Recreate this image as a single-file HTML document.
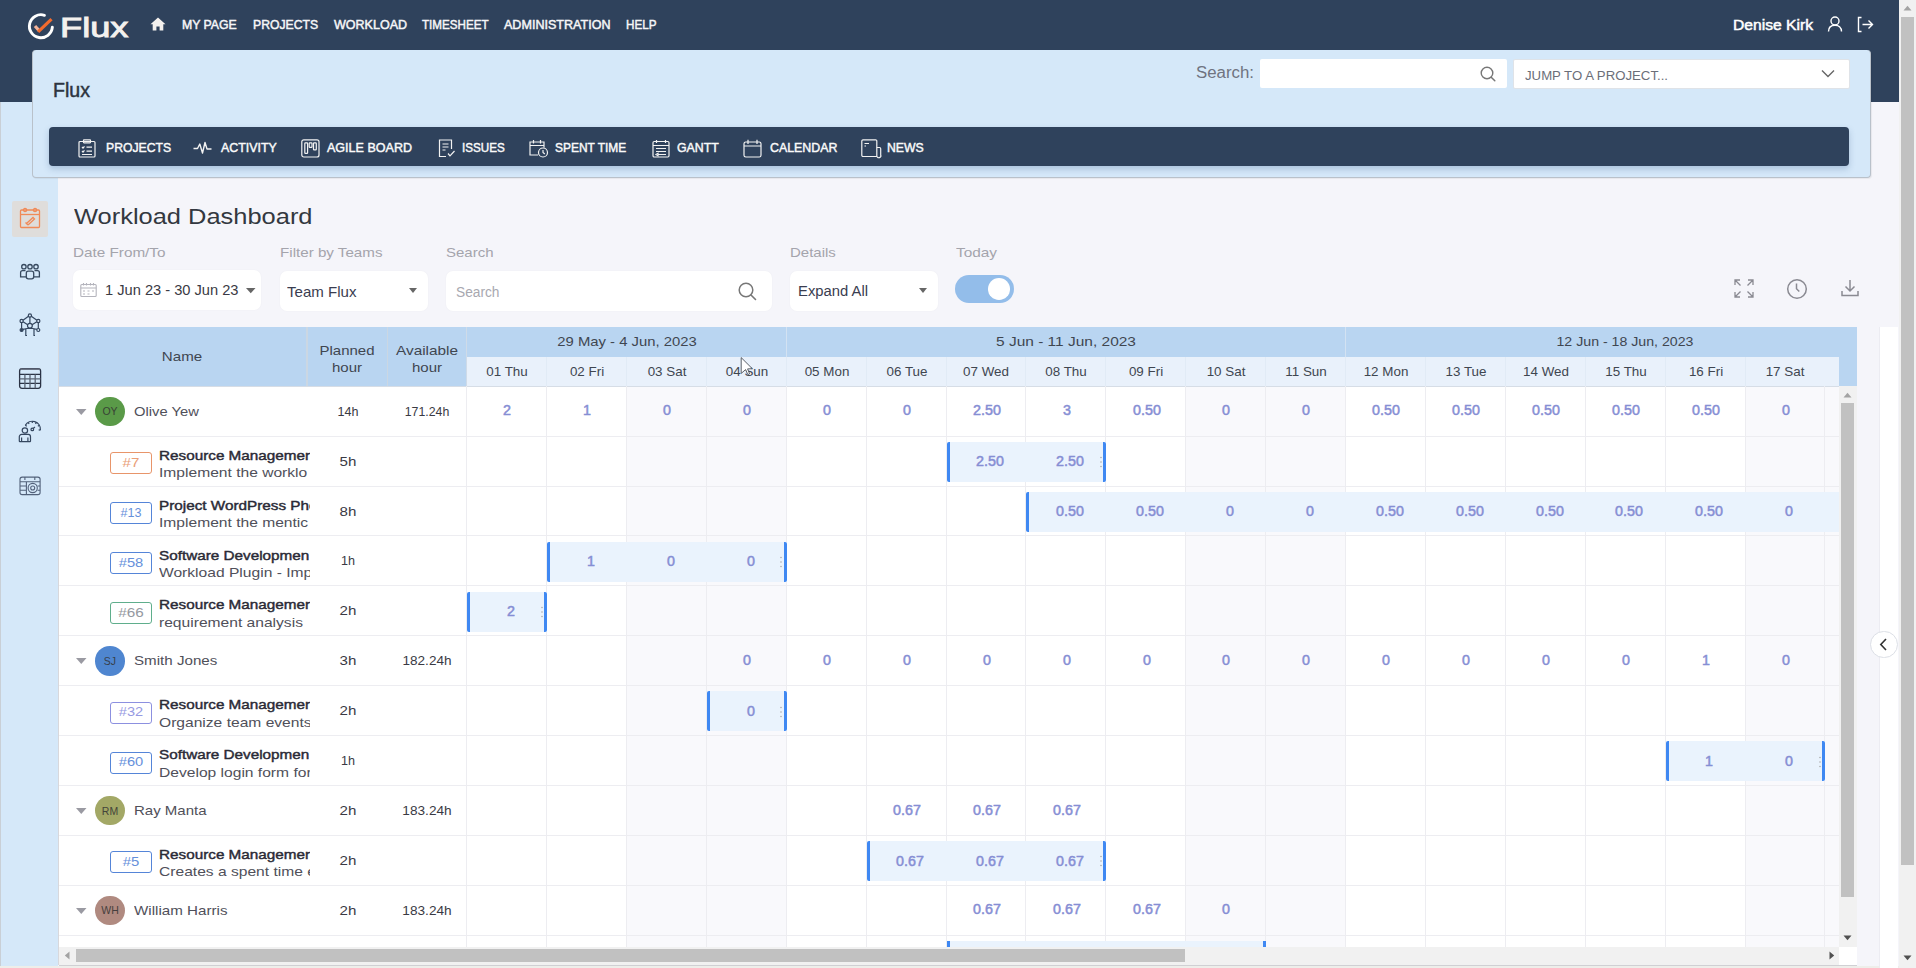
<!DOCTYPE html>
<html><head><meta charset="utf-8">
<title>Workload Dashboard</title>
<style>
*{box-sizing:border-box;margin:0;padding:0}
html,body{width:1916px;height:968px;overflow:hidden;background:#f5f5fa;font-family:"Liberation Sans",sans-serif;color:#333}
.t{position:absolute;white-space:nowrap;line-height:1}
.r{position:absolute}
svg{position:absolute;overflow:visible}
</style></head><body>
<div class="r" style="left:0px;top:0px;width:1899px;height:102px;background:#2f425c;"></div><div class="r" style="left:1899px;top:0px;width:17px;height:968px;background:#f1f1f1;"></div><div class="r" style="left:1901px;top:17px;width:13px;height:848px;background:#c1c1c1;"></div><svg style="left:1903px;top:5px" width="9" height="6"><path d="M0.5 5.5 L4.5 0.8 L8.5 5.5Z" fill="#a3a3a3"/></svg><svg style="left:1903px;top:955px" width="9" height="6"><path d="M0.5 0.5 L4.5 5.2 L8.5 0.5Z" fill="#505050"/></svg><svg style="left:27px;top:12px" width="30" height="30" viewBox="0 0 30 30">
<path d="M17.45 3.26 A11.5 11.5 0 1 0 25.36 15.2" fill="none" stroke="#fff" stroke-width="2.9" stroke-linecap="round"/>
<path d="M8 14 L12.2 18.8" fill="none" stroke="#f3b49b" stroke-width="3.2" stroke-linecap="butt"/>
<path d="M11.1 19.9 L24.5 7.2" fill="none" stroke="#f26b2e" stroke-width="3.2" stroke-linecap="butt"/>
</svg><div class="t" style="top:13.90px;font-size:28px;font-weight:400;color:#f4f1ee;-webkit-text-stroke:0.9px #f4f1ee;left:59.50px;transform:scaleX(1.2947);transform-origin:0 0;"><span id="f1">Flux</span></div><svg style="left:150px;top:17px" width="16" height="14" viewBox="0 0 16 14"><path d="M8 0.5 L15.5 7.2 L13.3 7.2 L13.3 13.5 L9.6 13.5 L9.6 9.5 L6.4 9.5 L6.4 13.5 L2.7 13.5 L2.7 7.2 L0.5 7.2Z" fill="#f4f1ee"/></svg><div class="t" style="top:18.87px;font-size:12.2px;font-weight:400;color:#f6f6f8;-webkit-text-stroke:0.45px #f6f6f8;left:182.40px;transform:scaleX(1.0069);transform-origin:0 0;"><span id="f2">MY PAGE</span></div><div class="t" style="top:18.87px;font-size:12.2px;font-weight:400;color:#f6f6f8;-webkit-text-stroke:0.45px #f6f6f8;left:252.50px;transform:scaleX(1.0013);transform-origin:0 0;"><span id="f3">PROJECTS</span></div><div class="t" style="top:18.87px;font-size:12.2px;font-weight:400;color:#f6f6f8;-webkit-text-stroke:0.45px #f6f6f8;left:333.60px;transform:scaleX(1.0280);transform-origin:0 0;"><span id="f4">WORKLOAD</span></div><div class="t" style="top:18.87px;font-size:12.2px;font-weight:400;color:#f6f6f8;-webkit-text-stroke:0.45px #f6f6f8;left:422.20px;transform:scaleX(0.9534);transform-origin:0 0;"><span id="f5">TIMESHEET</span></div><div class="t" style="top:18.87px;font-size:12.2px;font-weight:400;color:#f6f6f8;-webkit-text-stroke:0.45px #f6f6f8;left:504.30px;transform:scaleX(1.0302);transform-origin:0 0;"><span id="f6">ADMINISTRATION</span></div><div class="t" style="top:18.87px;font-size:12.2px;font-weight:400;color:#f6f6f8;-webkit-text-stroke:0.45px #f6f6f8;left:625.80px;transform:scaleX(0.9578);transform-origin:0 0;"><span id="f7">HELP</span></div><div class="t" style="top:17.10px;font-size:15px;font-weight:400;color:#fff;-webkit-text-stroke:0.5px #fff;left:1732.50px;transform:scaleX(1.0430);transform-origin:0 0;"><span id="f8">Denise Kirk</span></div><svg style="left:1827px;top:16px" width="16" height="16" viewBox="0 0 16 16"><circle cx="8" cy="5" r="4" fill="none" stroke="#fff" stroke-width="1.4"/><path d="M1.5 15.5 C1.5 11 4.5 9.2 8 9.2 C11.5 9.2 14.5 11 14.5 15.5" fill="none" stroke="#fff" stroke-width="1.4"/></svg><svg style="left:1857px;top:16px" width="17" height="17" viewBox="0 0 17 17"><path d="M4.5 1.5 L1.5 1.5 L1.5 15.5 L4.5 15.5" fill="none" stroke="#fff" stroke-width="1.4"/><path d="M5.5 8.5 L15.5 8.5 M11.5 4.5 L15.5 8.5 L11.5 12.5" fill="none" stroke="#fff" stroke-width="1.4"/></svg><div class="r" style="left:0px;top:102px;width:58px;height:866px;background:#d5e8f9;"></div><div class="r" style="left:0px;top:102px;width:1px;height:866px;background:#c9cfd6;"></div><div class="r" style="left:32px;top:50px;width:1839px;height:128px;background:#d5e8f9;border-radius:4px;border:1px solid #b9c1ca;border-top:none;box-shadow:1px 1px 1px rgba(0,0,0,0.06)"></div><div class="t" style="top:81.39px;font-size:19.5px;font-weight:400;color:#2d3440;-webkit-text-stroke:0.45px #2d3440;left:52.50px;transform:scaleX(1.0042);transform-origin:0 0;"><span id="f9">Flux</span></div><div class="t" style="top:65.46px;font-size:16px;font-weight:400;color:#6f7380;left:1196.00px;transform:scaleX(1.0519);transform-origin:0 0;"><span id="f10">Search:</span></div><div class="r" style="left:1260px;top:59px;width:247px;height:29px;background:#fff;border-radius:2px"></div><svg style="left:1480px;top:66px" width="16" height="16" viewBox="0 0 16 16"><circle cx="7" cy="7" r="5.8" fill="none" stroke="#777" stroke-width="1.4"/><path d="M11.2 11.2 L14.8 14.8" stroke="#777" stroke-width="1.5" stroke-linecap="round"/></svg><div class="r" style="left:1513px;top:59px;width:337px;height:30px;background:#fff;border:1px solid #dfe3e8;border-radius:2px"></div><div class="t" style="top:70.02px;font-size:12.5px;font-weight:400;color:#6b6e78;left:1525.00px;transform:scaleX(1.0556);transform-origin:0 0;"><span id="f11">JUMP TO A PROJECT...</span></div><svg style="left:1821px;top:69px" width="14" height="9" viewBox="0 0 14 9"><path d="M1 1.5 L7 7.5 L13 1.5" fill="none" stroke="#666" stroke-width="1.4"/></svg><div class="r" style="left:49px;top:126.5px;width:1800px;height:39.5px;background:#2f425c;border-radius:4px;box-shadow:0 3px 6px rgba(40,80,130,0.25)"></div><div class="t" style="top:141.30px;font-size:13px;font-weight:400;color:#fafafa;-webkit-text-stroke:0.45px #fafafa;left:105.80px;transform:scaleX(0.9402);transform-origin:0 0;"><span id="f12">PROJECTS</span></div><div class="t" style="top:141.30px;font-size:13px;font-weight:400;color:#fafafa;-webkit-text-stroke:0.45px #fafafa;left:221.20px;transform:scaleX(0.9536);transform-origin:0 0;"><span id="f13">ACTIVITY</span></div><div class="t" style="top:141.30px;font-size:13px;font-weight:400;color:#fafafa;-webkit-text-stroke:0.45px #fafafa;left:327.00px;transform:scaleX(0.9644);transform-origin:0 0;"><span id="f14">AGILE BOARD</span></div><div class="t" style="top:141.30px;font-size:13px;font-weight:400;color:#fafafa;-webkit-text-stroke:0.45px #fafafa;left:462.00px;transform:scaleX(0.8975);transform-origin:0 0;"><span id="f15">ISSUES</span></div><div class="t" style="top:141.30px;font-size:13px;font-weight:400;color:#fafafa;-webkit-text-stroke:0.45px #fafafa;left:555.30px;transform:scaleX(0.9182);transform-origin:0 0;"><span id="f16">SPENT TIME</span></div><div class="t" style="top:141.30px;font-size:13px;font-weight:400;color:#fafafa;-webkit-text-stroke:0.45px #fafafa;left:677.00px;transform:scaleX(0.9509);transform-origin:0 0;"><span id="f17">GANTT</span></div><div class="t" style="top:141.30px;font-size:13px;font-weight:400;color:#fafafa;-webkit-text-stroke:0.45px #fafafa;left:769.50px;transform:scaleX(0.9520);transform-origin:0 0;"><span id="f18">CALENDAR</span></div><div class="t" style="top:141.30px;font-size:13px;font-weight:400;color:#fafafa;-webkit-text-stroke:0.45px #fafafa;left:886.70px;transform:scaleX(0.9410);transform-origin:0 0;"><span id="f19">NEWS</span></div><svg style="left:78px;top:139px" width="19" height="19" viewBox="0 0 19 19" fill="none" stroke="#f2f2f2" stroke-width="1.2"><rect x="1" y="2.5" width="16" height="15.5" rx="1"/><rect x="5.5" y="0.8" width="7" height="3" rx="0.5"/><path d="M4 8 L5 9 L6.5 7.3 M8.5 8.2 H14 M4 12 L5 13 L6.5 11.3 M8.5 12.2 H14 M4 15.5 H14"/></svg><svg style="left:193px;top:141px" width="19" height="14" viewBox="0 0 19 14" fill="none" stroke="#f2f2f2" stroke-width="1.4" stroke-linejoin="round"><path d="M0.5 7.5 H4.5 L6.8 3 L9.5 12 L12 1.5 L14 8 L18.5 8"/></svg><svg style="left:301px;top:139px" width="19" height="19" viewBox="0 0 19 19" fill="none" stroke="#f2f2f2" stroke-width="1.2"><rect x="0.8" y="0.8" width="17.2" height="17.2" rx="2"/><rect x="3.8" y="3.8" width="2.8" height="10.5" rx="0.6"/><rect x="8.2" y="3.8" width="2.8" height="4.5" rx="0.6"/><rect x="12.5" y="3.8" width="2.8" height="7" rx="0.6"/></svg><svg style="left:438px;top:139px" width="18" height="19" viewBox="0 0 18 19" fill="none" stroke="#f2f2f2" stroke-width="1.2"><path d="M8 17.5 H1.5 V1 H13.5 V10"/><path d="M4.5 5 H10.5 M4.5 8 H10.5 M4.5 11 H7.5"/><path d="M10 14.5 L12 16.8 L16.5 12"/></svg><svg style="left:529px;top:139px" width="20" height="19" viewBox="0 0 20 19" fill="none" stroke="#f2f2f2" stroke-width="1.2"><path d="M9 16 H1 V3 H15 V8.5"/><path d="M1 6.5 H15 M4.5 1 V4.5 M11.5 1 V4.5"/><circle cx="14" cy="13.5" r="4.5"/><path d="M14 11 V13.5 L15.8 15"/></svg><svg style="left:652px;top:139px" width="18" height="19" viewBox="0 0 18 19" fill="none" stroke="#f2f2f2" stroke-width="1.2"><rect x="1" y="2.5" width="16" height="15.5" rx="1.2"/><path d="M1 6.5 H17 M4.5 1 V4 M13.5 1 V4 M4 9.5 H14 M4 12.5 H14 M6 15.5 H14 M4 15.5 L6 14.3 V16.7Z"/></svg><svg style="left:743px;top:139px" width="19" height="19" viewBox="0 0 19 19" fill="none" stroke="#f2f2f2" stroke-width="1.2"><rect x="1" y="3" width="17" height="15" rx="1.8"/><path d="M1 7 H18 M5 0.8 V5 M14 0.8 V5"/></svg><svg style="left:861px;top:139px" width="21" height="19" viewBox="0 0 21 19" fill="none" stroke="#f2f2f2" stroke-width="1.2"><path d="M16 17.5 H2 A1.2 1.2 0 0 1 0.8 16.3 V1.8 A1.2 1.2 0 0 1 2 0.8 H14.5 A1.2 1.2 0 0 1 15.8 2 V17.5"/><path d="M15.8 8.5 H18.5 A1.2 1.2 0 0 1 19.7 9.7 V16 A1.5 1.5 0 0 1 16 17.5"/><path d="M3.5 4.5 H8 M3.5 7 H5"/></svg><div class="r" style="left:12px;top:200.5px;width:36px;height:36px;background:#dfdddb;border-radius:2px"></div><svg style="left:19px;top:207px" width="22" height="22" viewBox="0 0 22 22" fill="none" stroke="#f08a58" stroke-width="1.3"><rect x="1.5" y="3" width="19" height="17.5" rx="1"/><path d="M1.5 7.5 H20.5"/><circle cx="6" cy="3" r="1.6"/><circle cx="16" cy="3" r="1.6"/><path d="M6.5 15.5 L9 18 M7.5 16.5 L14 10.5 L15.5 12 L9 18"/></svg><svg style="left:14px;top:255px" width="32" height="32" viewBox="0 0 32 32" fill="none" stroke="#37495f" stroke-width="1.3"><circle cx="9.9" cy="11.7" r="2.2"/><circle cx="16" cy="11.7" r="2.2"/><circle cx="22" cy="11.7" r="2.2"/><path d="M12.3 21.8 H6.6 V17.6 A2 2 0 0 1 8.6 15.6 H11.5"/><path d="M19.7 21.8 H25.4 V17.6 A2 2 0 0 0 23.4 15.6 H20.5"/><rect x="12.3" y="16.2" width="7.4" height="7.6" rx="2"/></svg><svg style="left:14px;top:310px" width="32" height="32" viewBox="0 0 32 32" fill="none" stroke="#34465f" stroke-width="1.2"><circle cx="15.9" cy="5.5" r="1.6"/><circle cx="7.6" cy="11" r="1.6"/><circle cx="24.3" cy="11" r="1.6"/><circle cx="7.6" cy="20" r="1.5" fill="#34465f"/><circle cx="24.3" cy="20" r="1.5"/><circle cx="15.9" cy="15.8" r="2.4"/><path d="M14.5 6.3 L9 10.2 M17.3 6.3 L22.9 10.2 M15.9 7.1 V13.4 M9.1 11.8 L13.7 14.7 M22.8 11.8 L18.1 14.7 M7.6 12.6 V18.5 M24.3 12.6 V18.5 M9 19.4 L13 18.5 H18.8 L22.9 19.4 M11.8 19 V25.5 H13 M20 19 V25.5 H21"/></svg><svg style="left:14px;top:363px" width="32" height="32" viewBox="0 0 32 32" fill="none" stroke="#2b3345" stroke-width="1.3"><rect x="5.6" y="5.6" width="21" height="19.7" rx="2.5"/><path d="M5.6 11.4 H26.6 M5.6 20.3 H26.6"/><path d="M5.6 15.9 H26.6 M10.9 11.4 V25.3 M16 11.4 V25.3 M21.2 11.4 V25.3" stroke="#5a6474"/><path d="M6.5 6.2 H25.7" stroke="#6a7384" stroke-width="1.6"/></svg><svg style="left:14px;top:416px" width="32" height="32" viewBox="0 0 32 32" fill="none" stroke="#34465f" stroke-width="1.2"><path d="M11.3 9.35 A8.1 8.1 0 0 1 26.4 14.1"/><path d="M11.29 9.35 L12.76 10.20 M14.25 6.39 L15.10 7.86 M18.30 5.30 L18.30 7.00 M22.35 6.39 L21.50 7.86 M25.31 9.35 L23.84 10.20 M26.37 14.11 L24.68 13.96 "/><circle cx="18.3" cy="13.4" r="1.3"/><path d="M19.2 12.5 L20.9 11"/><circle cx="10.9" cy="14.5" r="2.7"/><path d="M8.4 25.6 H5.9 A0.8 0.8 0 0 1 5.3 25 V20.7 A2.3 2.3 0 0 1 7.6 18.4 H14.3 A2.3 2.3 0 0 1 16.5 20.7 V25 A0.8 0.8 0 0 1 15.9 25.6 Z M7.6 21.5 V25.6 M13.9 21.5 V25.6"/></svg><svg style="left:14px;top:470px" width="32" height="32" viewBox="0 0 32 32" fill="none" stroke="#52617a" stroke-width="1.1"><rect x="6" y="7.1" width="20.1" height="17.5" rx="2.2"/><path d="M6 11.7 H26.1 M6 16 H12.4 M6 20.3 H12.4 M12.4 11.7 V24.6 M10.9 7.1 V10 M20.8 7.1 V10 M23.5 16 H26.1 M23.5 20.3 H26.1"/><circle cx="18.7" cy="18" r="4.6"/><circle cx="18.7" cy="18" r="2"/></svg><div class="t" style="top:205.55px;font-size:22.5px;font-weight:400;color:#333840;left:73.50px;transform:scaleX(1.1306);transform-origin:0 0;"><span id="f20">Workload Dashboard</span></div><div class="t" style="top:246.00px;font-size:13px;font-weight:400;color:#a4a4ac;left:73.40px;transform:scaleX(1.1746);transform-origin:0 0;"><span id="f21">Date From/To</span></div><div class="t" style="top:246.00px;font-size:13px;font-weight:400;color:#a4a4ac;left:280.30px;transform:scaleX(1.1660);transform-origin:0 0;"><span id="f22">Filter by Teams</span></div><div class="t" style="top:246.00px;font-size:13px;font-weight:400;color:#a4a4ac;left:445.70px;transform:scaleX(1.1528);transform-origin:0 0;"><span id="f23">Search</span></div><div class="t" style="top:246.00px;font-size:13px;font-weight:400;color:#a4a4ac;left:790.00px;transform:scaleX(1.1522);transform-origin:0 0;"><span id="f24">Details</span></div><div class="t" style="top:246.00px;font-size:13px;font-weight:400;color:#a4a4ac;left:956.20px;transform:scaleX(1.1814);transform-origin:0 0;"><span id="f25">Today</span></div><div class="r" style="left:73px;top:270px;width:188px;height:40px;background:#fff;border-radius:7px;box-shadow:0 0 2px rgba(0,0,0,0.04)"></div><svg style="left:80px;top:282px" width="17" height="15" viewBox="0 0 17 15" fill="none" stroke="#b4b4bc" stroke-width="1.1"><rect x="0.8" y="2.5" width="15.4" height="12" rx="1"/><path d="M0.8 6 H16.2 M3.5 1 V3.5 M6.5 1 V3.5 M10.5 1 V3.5 M13.5 1 V3.5 M3 9 H5 M7.5 9 H9.5 M12 9 H14 M3 12 H5 M7.5 12 H9.5"/></svg><div class="t" style="top:282.55px;font-size:14px;font-weight:400;color:#3a3a44;left:105.00px;transform:scaleX(1.0458);transform-origin:0 0;"><span id="f26">1 Jun 23 - 30 Jun 23</span></div><svg style="left:246px;top:288px" width="10" height="6"><path d="M0 0 H9.5 L4.75 5.2Z" fill="#666"/></svg><div class="r" style="left:279.5px;top:271px;width:148px;height:40px;background:#fff;border-radius:7px;box-shadow:0 0 2px rgba(0,0,0,0.04)"></div><div class="t" style="top:283.70px;font-size:15px;font-weight:400;color:#3a3d50;left:287.20px;transform:scaleX(1.0045);transform-origin:0 0;"><span id="f27">Team Flux</span></div><svg style="left:409px;top:288px" width="9" height="6"><path d="M0 0 H8 L4 5Z" fill="#666"/></svg><div class="r" style="left:445.5px;top:271px;width:326px;height:40px;background:#fff;border-radius:7px;box-shadow:0 0 2px rgba(0,0,0,0.04)"></div><div class="t" style="top:284.65px;font-size:14px;font-weight:400;color:#a8a8b0;left:456.00px;transform:scaleX(0.9806);transform-origin:0 0;"><span id="f28">Search</span></div><svg style="left:738px;top:282px" width="19" height="19" viewBox="0 0 19 19"><circle cx="8" cy="8" r="6.8" fill="none" stroke="#777" stroke-width="1.5"/><path d="M13 13 L17.5 17.5" stroke="#777" stroke-width="1.6" stroke-linecap="round"/></svg><div class="r" style="left:789.5px;top:271px;width:148px;height:40px;background:#fff;border-radius:7px;box-shadow:0 0 2px rgba(0,0,0,0.04)"></div><div class="t" style="top:284.45px;font-size:14px;font-weight:400;color:#3a3d50;left:797.60px;transform:scaleX(1.0579);transform-origin:0 0;"><span id="f29">Expand All</span></div><svg style="left:919px;top:288px" width="9" height="6"><path d="M0 0 H8 L4 5Z" fill="#666"/></svg><div class="r" style="left:955px;top:275.2px;width:59px;height:27.8px;background:#93bdea;border-radius:14px"></div><div class="r" style="left:987.5px;top:278px;width:22.5px;height:22px;background:#fff;border-radius:50%"></div><svg style="left:1734px;top:279px" width="20" height="19" viewBox="0 0 20 19" fill="none" stroke="#8a8a92" stroke-width="1.3"><path d="M1 6 V1 H6 M1 1 L6.5 6.5 M19 6 V1 H14 M19 1 L13.5 6.5 M1 13 V18 H6 M1 18 L6.5 12.5 M19 13 V18 H14 M19 18 L13.5 12.5"/></svg><svg style="left:1786px;top:278px" width="22" height="22" viewBox="0 0 22 22" fill="none" stroke="#8a8a92" stroke-width="1.5"><circle cx="11" cy="11" r="9.3"/><path d="M10.5 5.5 V10.8 L13.3 13.5"/></svg><svg style="left:1841px;top:279px" width="18" height="18" viewBox="0 0 18 18" fill="none" stroke="#8a8a92" stroke-width="1.5"><path d="M9 1 V12 M4.5 7.5 L9 12 L13.5 7.5 M1 12 V16.5 H17 V12"/></svg><div class="r" style="left:59px;top:386px;width:1780px;height:561px;background:#ffffff;"></div><div class="r" style="left:626.40px;top:386px;width:79.90px;height:561px;background:#f9f9fc"></div><div class="r" style="left:706.30px;top:386px;width:79.90px;height:561px;background:#f9f9fc"></div><div class="r" style="left:1185.70px;top:386px;width:79.90px;height:561px;background:#f9f9fc"></div><div class="r" style="left:1265.60px;top:386px;width:79.90px;height:561px;background:#f9f9fc"></div><div class="r" style="left:1745.00px;top:386px;width:79.90px;height:561px;background:#f9f9fc"></div><div class="r" style="left:1824.90px;top:386px;width:14.10px;height:561px;background:#f9f9fc"></div><div class="r" style="left:58px;top:327px;width:1799px;height:59px;background:#b9d5f1;"></div><div class="r" style="left:466.60px;top:357px;width:1372.40px;height:29px;background:#e9f1fb"></div><div class="r" style="left:58px;top:327px;width:1px;height:638px;background:#d8d8dc;"></div><div class="r" style="left:306px;top:327px;width:1.5px;height:59px;background:#cbd7e3;"></div><div class="r" style="left:386.5px;top:327px;width:1.5px;height:59px;background:#cbd7e3;"></div><div class="r" style="left:465.5px;top:327px;width:1.5px;height:59px;background:#cfdbe8;"></div><div class="r" style="left:785.70px;top:327px;width:1px;height:30px;background:#d3e2f2"></div><div class="r" style="left:1345.00px;top:327px;width:1px;height:30px;background:#d3e2f2"></div><div class="r" style="left:546.00px;top:357px;width:1px;height:29px;background:#e1ebf6"></div><div class="r" style="left:625.90px;top:357px;width:1px;height:29px;background:#e1ebf6"></div><div class="r" style="left:705.80px;top:357px;width:1px;height:29px;background:#e1ebf6"></div><div class="r" style="left:785.70px;top:357px;width:1px;height:29px;background:#e1ebf6"></div><div class="r" style="left:865.60px;top:357px;width:1px;height:29px;background:#e1ebf6"></div><div class="r" style="left:945.50px;top:357px;width:1px;height:29px;background:#e1ebf6"></div><div class="r" style="left:1025.40px;top:357px;width:1px;height:29px;background:#e1ebf6"></div><div class="r" style="left:1105.30px;top:357px;width:1px;height:29px;background:#e1ebf6"></div><div class="r" style="left:1185.20px;top:357px;width:1px;height:29px;background:#e1ebf6"></div><div class="r" style="left:1265.10px;top:357px;width:1px;height:29px;background:#e1ebf6"></div><div class="r" style="left:1345.00px;top:357px;width:1px;height:29px;background:#e1ebf6"></div><div class="r" style="left:1424.90px;top:357px;width:1px;height:29px;background:#e1ebf6"></div><div class="r" style="left:1504.80px;top:357px;width:1px;height:29px;background:#e1ebf6"></div><div class="r" style="left:1584.70px;top:357px;width:1px;height:29px;background:#e1ebf6"></div><div class="r" style="left:1664.60px;top:357px;width:1px;height:29px;background:#e1ebf6"></div><div class="r" style="left:1744.50px;top:357px;width:1px;height:29px;background:#e1ebf6"></div><div class="r" style="left:59px;top:385.5px;width:1780px;height:1px;background:#d6dde6;"></div><div class="r" style="left:466.10px;top:386px;width:1px;height:561px;background:#ededf1"></div><div class="r" style="left:546.00px;top:386px;width:1px;height:561px;background:#ededf1"></div><div class="r" style="left:625.90px;top:386px;width:1px;height:561px;background:#ededf1"></div><div class="r" style="left:705.80px;top:386px;width:1px;height:561px;background:#ededf1"></div><div class="r" style="left:785.70px;top:386px;width:1px;height:561px;background:#ededf1"></div><div class="r" style="left:865.60px;top:386px;width:1px;height:561px;background:#ededf1"></div><div class="r" style="left:945.50px;top:386px;width:1px;height:561px;background:#ededf1"></div><div class="r" style="left:1025.40px;top:386px;width:1px;height:561px;background:#ededf1"></div><div class="r" style="left:1105.30px;top:386px;width:1px;height:561px;background:#ededf1"></div><div class="r" style="left:1185.20px;top:386px;width:1px;height:561px;background:#ededf1"></div><div class="r" style="left:1265.10px;top:386px;width:1px;height:561px;background:#ededf1"></div><div class="r" style="left:1345.00px;top:386px;width:1px;height:561px;background:#ededf1"></div><div class="r" style="left:1424.90px;top:386px;width:1px;height:561px;background:#ededf1"></div><div class="r" style="left:1504.80px;top:386px;width:1px;height:561px;background:#ededf1"></div><div class="r" style="left:1584.70px;top:386px;width:1px;height:561px;background:#ededf1"></div><div class="r" style="left:1664.60px;top:386px;width:1px;height:561px;background:#ededf1"></div><div class="r" style="left:1744.50px;top:386px;width:1px;height:561px;background:#ededf1"></div><div class="r" style="left:1824.40px;top:386px;width:1px;height:561px;background:#ededf1"></div><div class="r" style="left:59px;top:435.60px;width:1780px;height:1px;background:#ededf1"></div><div class="r" style="left:59px;top:485.50px;width:1780px;height:1px;background:#ededf1"></div><div class="r" style="left:59px;top:535.40px;width:1780px;height:1px;background:#ededf1"></div><div class="r" style="left:59px;top:585.30px;width:1780px;height:1px;background:#ededf1"></div><div class="r" style="left:59px;top:635.20px;width:1780px;height:1px;background:#ededf1"></div><div class="r" style="left:59px;top:685.10px;width:1780px;height:1px;background:#ededf1"></div><div class="r" style="left:59px;top:735.00px;width:1780px;height:1px;background:#ededf1"></div><div class="r" style="left:59px;top:784.90px;width:1780px;height:1px;background:#ededf1"></div><div class="r" style="left:59px;top:834.80px;width:1780px;height:1px;background:#ededf1"></div><div class="r" style="left:59px;top:884.70px;width:1780px;height:1px;background:#ededf1"></div><div class="r" style="left:59px;top:934.60px;width:1780px;height:1px;background:#ededf1"></div><div class="t" style="top:350.30px;font-size:13px;font-weight:400;color:#3f4650;left:82.40px;width:200px;text-align:center;transform:scaleX(1.1618);transform-origin:50% 0;"><span id="f30">Name</span></div><div class="t" style="top:343.50px;font-size:13px;font-weight:400;color:#3f4650;left:247.10px;width:200px;text-align:center;transform:scaleX(1.1526);transform-origin:50% 0;"><span id="f31">Planned</span></div><div class="t" style="top:360.90px;font-size:13px;font-weight:400;color:#3f4650;left:247.10px;width:200px;text-align:center;transform:scaleX(1.1525);transform-origin:50% 0;"><span id="f32">hour</span></div><div class="t" style="top:343.50px;font-size:13px;font-weight:400;color:#3f4650;left:326.70px;width:200px;text-align:center;transform:scaleX(1.1802);transform-origin:50% 0;"><span id="f33">Available</span></div><div class="t" style="top:360.90px;font-size:13px;font-weight:400;color:#3f4650;left:326.70px;width:200px;text-align:center;transform:scaleX(1.1525);transform-origin:50% 0;"><span id="f34">hour</span></div><div class="t" style="top:335.00px;font-size:13px;font-weight:400;color:#3f4650;left:477.00px;width:300px;text-align:center;transform:scaleX(1.1405);transform-origin:50% 0;"><span id="f35">29 May - 4 Jun, 2023</span></div><div class="t" style="top:335.00px;font-size:13px;font-weight:400;color:#3f4650;left:916.30px;width:300px;text-align:center;transform:scaleX(1.1907);transform-origin:50% 0;"><span id="f36">5 Jun - 11 Jun, 2023</span></div><div class="t" style="top:335.00px;font-size:13px;font-weight:400;color:#3f4650;left:1474.50px;width:300px;text-align:center;transform:scaleX(1.0893);transform-origin:50% 0;"><span id="f37">12 Jun - 18 Jun, 2023</span></div><div class="t" style="top:365.00px;font-size:13px;font-weight:400;color:#3f4650;left:467.05px;width:80px;text-align:center;transform:scaleX(1.0300);transform-origin:50% 0;"><span id="f38">01 Thu</span></div><div class="t" style="top:365.00px;font-size:13px;font-weight:400;color:#3f4650;left:546.95px;width:80px;text-align:center;transform:scaleX(1.0300);transform-origin:50% 0;"><span id="f39">02 Fri</span></div><div class="t" style="top:365.00px;font-size:13px;font-weight:400;color:#3f4650;left:626.85px;width:80px;text-align:center;transform:scaleX(1.0300);transform-origin:50% 0;"><span id="f40">03 Sat</span></div><div class="t" style="top:365.00px;font-size:13px;font-weight:400;color:#3f4650;left:706.75px;width:80px;text-align:center;transform:scaleX(1.0300);transform-origin:50% 0;"><span id="f41">04 Sun</span></div><div class="t" style="top:365.00px;font-size:13px;font-weight:400;color:#3f4650;left:786.65px;width:80px;text-align:center;transform:scaleX(1.0300);transform-origin:50% 0;"><span id="f42">05 Mon</span></div><div class="t" style="top:365.00px;font-size:13px;font-weight:400;color:#3f4650;left:866.55px;width:80px;text-align:center;transform:scaleX(1.0300);transform-origin:50% 0;"><span id="f43">06 Tue</span></div><div class="t" style="top:365.00px;font-size:13px;font-weight:400;color:#3f4650;left:946.45px;width:80px;text-align:center;transform:scaleX(1.0300);transform-origin:50% 0;"><span id="f44">07 Wed</span></div><div class="t" style="top:365.00px;font-size:13px;font-weight:400;color:#3f4650;left:1026.35px;width:80px;text-align:center;transform:scaleX(1.0300);transform-origin:50% 0;"><span id="f45">08 Thu</span></div><div class="t" style="top:365.00px;font-size:13px;font-weight:400;color:#3f4650;left:1106.25px;width:80px;text-align:center;transform:scaleX(1.0300);transform-origin:50% 0;"><span id="f46">09 Fri</span></div><div class="t" style="top:365.00px;font-size:13px;font-weight:400;color:#3f4650;left:1186.15px;width:80px;text-align:center;transform:scaleX(1.0300);transform-origin:50% 0;"><span id="f47">10 Sat</span></div><div class="t" style="top:365.00px;font-size:13px;font-weight:400;color:#3f4650;left:1266.05px;width:80px;text-align:center;transform:scaleX(1.0300);transform-origin:50% 0;"><span id="f48">11 Sun</span></div><div class="t" style="top:365.00px;font-size:13px;font-weight:400;color:#3f4650;left:1345.95px;width:80px;text-align:center;transform:scaleX(1.0300);transform-origin:50% 0;"><span id="f49">12 Mon</span></div><div class="t" style="top:365.00px;font-size:13px;font-weight:400;color:#3f4650;left:1425.85px;width:80px;text-align:center;transform:scaleX(1.0300);transform-origin:50% 0;"><span id="f50">13 Tue</span></div><div class="t" style="top:365.00px;font-size:13px;font-weight:400;color:#3f4650;left:1505.75px;width:80px;text-align:center;transform:scaleX(1.0300);transform-origin:50% 0;"><span id="f51">14 Wed</span></div><div class="t" style="top:365.00px;font-size:13px;font-weight:400;color:#3f4650;left:1585.65px;width:80px;text-align:center;transform:scaleX(1.0300);transform-origin:50% 0;"><span id="f52">15 Thu</span></div><div class="t" style="top:365.00px;font-size:13px;font-weight:400;color:#3f4650;left:1665.55px;width:80px;text-align:center;transform:scaleX(1.0300);transform-origin:50% 0;"><span id="f53">16 Fri</span></div><div class="t" style="top:365.00px;font-size:13px;font-weight:400;color:#3f4650;left:1745.45px;width:80px;text-align:center;transform:scaleX(1.0300);transform-origin:50% 0;"><span id="f54">17 Sat</span></div><svg style="left:75.5px;top:408.70px" width="11" height="7"><path d="M0 0 H10.5 L5.25 6Z" fill="#9a9aa2"/></svg><div class="r" style="left:95px;top:396.70px;width:29.6px;height:29.6px;border-radius:50%;background:#5a9a48"></div><div class="t" style="top:406.31px;font-size:10.5px;font-weight:400;color:#333;left:95.00px;width:30px;text-align:center;opacity:0.85;"><span id="f55">OY</span></div><div class="t" style="top:404.60px;font-size:13px;font-weight:400;color:#50505a;left:133.60px;transform:scaleX(1.1350);transform-origin:0 0;"><span id="f56">Olive Yew</span></div><div class="t" style="top:404.70px;font-size:13px;font-weight:400;color:#3a3a44;left:318.00px;width:60px;text-align:center;transform:scaleX(0.9676);transform-origin:50% 0;"><span id="f57">14h</span></div><div class="t" style="top:404.70px;font-size:13px;font-weight:400;color:#3a3a44;left:387.40px;width:80px;text-align:center;transform:scaleX(0.9468);transform-origin:50% 0;"><span id="f58">171.24h</span></div><div class="t" style="top:403.45px;font-size:14px;font-weight:400;color:#868ed4;-webkit-text-stroke:0.5px #868ed4;left:467.35px;width:80px;text-align:center;transform:scaleX(1.0200);transform-origin:50% 0;"><span id="f59">2</span></div><div class="t" style="top:403.45px;font-size:14px;font-weight:400;color:#868ed4;-webkit-text-stroke:0.5px #868ed4;left:547.25px;width:80px;text-align:center;transform:scaleX(1.0200);transform-origin:50% 0;"><span id="f60">1</span></div><div class="t" style="top:403.45px;font-size:14px;font-weight:400;color:#868ed4;-webkit-text-stroke:0.5px #868ed4;left:627.15px;width:80px;text-align:center;transform:scaleX(1.0200);transform-origin:50% 0;"><span id="f61">0</span></div><div class="t" style="top:403.45px;font-size:14px;font-weight:400;color:#868ed4;-webkit-text-stroke:0.5px #868ed4;left:707.05px;width:80px;text-align:center;transform:scaleX(1.0200);transform-origin:50% 0;"><span id="f62">0</span></div><div class="t" style="top:403.45px;font-size:14px;font-weight:400;color:#868ed4;-webkit-text-stroke:0.5px #868ed4;left:786.95px;width:80px;text-align:center;transform:scaleX(1.0200);transform-origin:50% 0;"><span id="f63">0</span></div><div class="t" style="top:403.45px;font-size:14px;font-weight:400;color:#868ed4;-webkit-text-stroke:0.5px #868ed4;left:866.85px;width:80px;text-align:center;transform:scaleX(1.0200);transform-origin:50% 0;"><span id="f64">0</span></div><div class="t" style="top:403.45px;font-size:14px;font-weight:400;color:#868ed4;-webkit-text-stroke:0.5px #868ed4;left:946.75px;width:80px;text-align:center;transform:scaleX(1.0200);transform-origin:50% 0;"><span id="f65">2.50</span></div><div class="t" style="top:403.45px;font-size:14px;font-weight:400;color:#868ed4;-webkit-text-stroke:0.5px #868ed4;left:1026.65px;width:80px;text-align:center;transform:scaleX(1.0200);transform-origin:50% 0;"><span id="f66">3</span></div><div class="t" style="top:403.45px;font-size:14px;font-weight:400;color:#868ed4;-webkit-text-stroke:0.5px #868ed4;left:1106.55px;width:80px;text-align:center;transform:scaleX(1.0200);transform-origin:50% 0;"><span id="f67">0.50</span></div><div class="t" style="top:403.45px;font-size:14px;font-weight:400;color:#868ed4;-webkit-text-stroke:0.5px #868ed4;left:1186.45px;width:80px;text-align:center;transform:scaleX(1.0200);transform-origin:50% 0;"><span id="f68">0</span></div><div class="t" style="top:403.45px;font-size:14px;font-weight:400;color:#868ed4;-webkit-text-stroke:0.5px #868ed4;left:1266.35px;width:80px;text-align:center;transform:scaleX(1.0200);transform-origin:50% 0;"><span id="f69">0</span></div><div class="t" style="top:403.45px;font-size:14px;font-weight:400;color:#868ed4;-webkit-text-stroke:0.5px #868ed4;left:1346.25px;width:80px;text-align:center;transform:scaleX(1.0200);transform-origin:50% 0;"><span id="f70">0.50</span></div><div class="t" style="top:403.45px;font-size:14px;font-weight:400;color:#868ed4;-webkit-text-stroke:0.5px #868ed4;left:1426.15px;width:80px;text-align:center;transform:scaleX(1.0200);transform-origin:50% 0;"><span id="f71">0.50</span></div><div class="t" style="top:403.45px;font-size:14px;font-weight:400;color:#868ed4;-webkit-text-stroke:0.5px #868ed4;left:1506.05px;width:80px;text-align:center;transform:scaleX(1.0200);transform-origin:50% 0;"><span id="f72">0.50</span></div><div class="t" style="top:403.45px;font-size:14px;font-weight:400;color:#868ed4;-webkit-text-stroke:0.5px #868ed4;left:1585.95px;width:80px;text-align:center;transform:scaleX(1.0200);transform-origin:50% 0;"><span id="f73">0.50</span></div><div class="t" style="top:403.45px;font-size:14px;font-weight:400;color:#868ed4;-webkit-text-stroke:0.5px #868ed4;left:1665.85px;width:80px;text-align:center;transform:scaleX(1.0200);transform-origin:50% 0;"><span id="f74">0.50</span></div><div class="t" style="top:403.45px;font-size:14px;font-weight:400;color:#868ed4;-webkit-text-stroke:0.5px #868ed4;left:1745.75px;width:80px;text-align:center;transform:scaleX(1.0200);transform-origin:50% 0;"><span id="f75">0</span></div><div class="r" style="left:110px;top:452.10px;width:42px;height:22px;border:1.3px solid #e8956a;border-radius:3px;background:#fff"></div><div class="t" style="top:455.90px;font-size:13px;font-weight:400;color:#e8956a;left:110.00px;width:42px;text-align:center;transform:scaleX(1.1611);transform-origin:50% 0;opacity:0.9;"><span id="f76">#7</span></div><div class="r" style="left:158px;top:438.10px;width:152px;height:46px;overflow:hidden"><div class="t" style="left:1px;top:10.70px;font-size:13px;font-weight:400;color:#2a2a36;-webkit-text-stroke:0.42px #2a2a36;transform:scaleX(1.175);transform-origin:0 0">Resource Managemer</div><div class="t" style="left:1px;top:28.00px;font-size:13px;font-weight:400;color:#50505a;transform:scaleX(1.2);transform-origin:0 0">Implement the worklo</div></div><div class="t" style="top:454.60px;font-size:13px;font-weight:400;color:#3a3a44;left:318.00px;width:60px;text-align:center;transform:scaleX(1.1611);transform-origin:50% 0;"><span id="f77">5h</span></div><div class="r" style="left:946.50px;top:441.80px;width:159.80px;height:40px;background:#eaf3fd;border-left:3px solid #3f88f2;border-radius:2px 0 0 2px"></div><div class="r" style="left:1103.30px;top:441.80px;width:3px;height:40px;background:#3f88f2;border-radius:0 2px 2px 0"></div><svg style="left:1099.80px;top:456.10px" width="2" height="12"><circle cx="1" cy="1.5" r="0.8" fill="#aaa"/><circle cx="1" cy="6" r="0.8" fill="#aaa"/><circle cx="1" cy="10.5" r="0.8" fill="#aaa"/></svg><div class="t" style="top:454.35px;font-size:14px;font-weight:400;color:#868ed4;-webkit-text-stroke:0.5px #868ed4;left:950.25px;width:80px;text-align:center;transform:scaleX(1.0200);transform-origin:50% 0;"><span id="f78">2.50</span></div><div class="t" style="top:454.35px;font-size:14px;font-weight:400;color:#868ed4;-webkit-text-stroke:0.5px #868ed4;left:1030.15px;width:80px;text-align:center;transform:scaleX(1.0200);transform-origin:50% 0;"><span id="f79">2.50</span></div><div class="r" style="left:110px;top:502.00px;width:42px;height:22px;border:1.3px solid #5585d8;border-radius:3px;background:#fff"></div><div class="t" style="top:505.80px;font-size:13px;font-weight:400;color:#5585d8;left:110.00px;width:42px;text-align:center;transform:scaleX(0.9676);transform-origin:50% 0;opacity:0.9;"><span id="f80">#13</span></div><div class="r" style="left:158px;top:488.00px;width:152px;height:46px;overflow:hidden"><div class="t" style="left:1px;top:10.70px;font-size:13px;font-weight:400;color:#2a2a36;-webkit-text-stroke:0.42px #2a2a36;transform:scaleX(1.175);transform-origin:0 0">Project WordPress Phc</div><div class="t" style="left:1px;top:28.00px;font-size:13px;font-weight:400;color:#50505a;transform:scaleX(1.2);transform-origin:0 0">Implement the mentic</div></div><div class="t" style="top:504.50px;font-size:13px;font-weight:400;color:#3a3a44;left:318.00px;width:60px;text-align:center;transform:scaleX(1.1611);transform-origin:50% 0;"><span id="f81">8h</span></div><div class="r" style="left:1026.40px;top:491.70px;width:812.60px;height:40px;background:#eaf3fd;border-left:3px solid #3f88f2;border-radius:2px 0 0 2px"></div><div class="t" style="top:504.25px;font-size:14px;font-weight:400;color:#868ed4;-webkit-text-stroke:0.5px #868ed4;left:1030.15px;width:80px;text-align:center;transform:scaleX(1.0200);transform-origin:50% 0;"><span id="f82">0.50</span></div><div class="t" style="top:504.25px;font-size:14px;font-weight:400;color:#868ed4;-webkit-text-stroke:0.5px #868ed4;left:1110.05px;width:80px;text-align:center;transform:scaleX(1.0200);transform-origin:50% 0;"><span id="f83">0.50</span></div><div class="t" style="top:504.25px;font-size:14px;font-weight:400;color:#868ed4;-webkit-text-stroke:0.5px #868ed4;left:1189.95px;width:80px;text-align:center;transform:scaleX(1.0200);transform-origin:50% 0;"><span id="f84">0</span></div><div class="t" style="top:504.25px;font-size:14px;font-weight:400;color:#868ed4;-webkit-text-stroke:0.5px #868ed4;left:1269.85px;width:80px;text-align:center;transform:scaleX(1.0200);transform-origin:50% 0;"><span id="f85">0</span></div><div class="t" style="top:504.25px;font-size:14px;font-weight:400;color:#868ed4;-webkit-text-stroke:0.5px #868ed4;left:1349.75px;width:80px;text-align:center;transform:scaleX(1.0200);transform-origin:50% 0;"><span id="f86">0.50</span></div><div class="t" style="top:504.25px;font-size:14px;font-weight:400;color:#868ed4;-webkit-text-stroke:0.5px #868ed4;left:1429.65px;width:80px;text-align:center;transform:scaleX(1.0200);transform-origin:50% 0;"><span id="f87">0.50</span></div><div class="t" style="top:504.25px;font-size:14px;font-weight:400;color:#868ed4;-webkit-text-stroke:0.5px #868ed4;left:1509.55px;width:80px;text-align:center;transform:scaleX(1.0200);transform-origin:50% 0;"><span id="f88">0.50</span></div><div class="t" style="top:504.25px;font-size:14px;font-weight:400;color:#868ed4;-webkit-text-stroke:0.5px #868ed4;left:1589.45px;width:80px;text-align:center;transform:scaleX(1.0200);transform-origin:50% 0;"><span id="f89">0.50</span></div><div class="t" style="top:504.25px;font-size:14px;font-weight:400;color:#868ed4;-webkit-text-stroke:0.5px #868ed4;left:1669.35px;width:80px;text-align:center;transform:scaleX(1.0200);transform-origin:50% 0;"><span id="f90">0.50</span></div><div class="t" style="top:504.25px;font-size:14px;font-weight:400;color:#868ed4;-webkit-text-stroke:0.5px #868ed4;left:1749.25px;width:80px;text-align:center;transform:scaleX(1.0200);transform-origin:50% 0;"><span id="f91">0</span></div><div class="r" style="left:110px;top:551.90px;width:42px;height:22px;border:1.3px solid #5585d8;border-radius:3px;background:#fff"></div><div class="t" style="top:555.70px;font-size:13px;font-weight:400;color:#5585d8;left:110.00px;width:42px;text-align:center;transform:scaleX(1.1289);transform-origin:50% 0;opacity:0.9;"><span id="f92">#58</span></div><div class="r" style="left:158px;top:537.90px;width:152px;height:46px;overflow:hidden"><div class="t" style="left:1px;top:10.70px;font-size:13px;font-weight:400;color:#2a2a36;-webkit-text-stroke:0.42px #2a2a36;transform:scaleX(1.175);transform-origin:0 0">Software Developmen</div><div class="t" style="left:1px;top:28.00px;font-size:13px;font-weight:400;color:#50505a;transform:scaleX(1.2);transform-origin:0 0">Workload Plugin - Imp</div></div><div class="t" style="top:554.40px;font-size:13px;font-weight:400;color:#3a3a44;left:318.00px;width:60px;text-align:center;transform:scaleX(0.9676);transform-origin:50% 0;"><span id="f93">1h</span></div><div class="r" style="left:547.00px;top:541.60px;width:239.70px;height:40px;background:#eaf3fd;border-left:3px solid #3f88f2;border-radius:2px 0 0 2px"></div><div class="r" style="left:783.70px;top:541.60px;width:3px;height:40px;background:#3f88f2;border-radius:0 2px 2px 0"></div><svg style="left:780.20px;top:555.90px" width="2" height="12"><circle cx="1" cy="1.5" r="0.8" fill="#aaa"/><circle cx="1" cy="6" r="0.8" fill="#aaa"/><circle cx="1" cy="10.5" r="0.8" fill="#aaa"/></svg><div class="t" style="top:554.15px;font-size:14px;font-weight:400;color:#868ed4;-webkit-text-stroke:0.5px #868ed4;left:550.75px;width:80px;text-align:center;transform:scaleX(1.0200);transform-origin:50% 0;"><span id="f94">1</span></div><div class="t" style="top:554.15px;font-size:14px;font-weight:400;color:#868ed4;-webkit-text-stroke:0.5px #868ed4;left:630.65px;width:80px;text-align:center;transform:scaleX(1.0200);transform-origin:50% 0;"><span id="f95">0</span></div><div class="t" style="top:554.15px;font-size:14px;font-weight:400;color:#868ed4;-webkit-text-stroke:0.5px #868ed4;left:710.55px;width:80px;text-align:center;transform:scaleX(1.0200);transform-origin:50% 0;"><span id="f96">0</span></div><div class="r" style="left:110px;top:601.80px;width:42px;height:22px;border:1.3px solid #5fae8c;border-radius:3px;background:#fff"></div><div class="t" style="top:605.60px;font-size:13px;font-weight:400;color:#8a8e96;left:110.00px;width:42px;text-align:center;transform:scaleX(1.1749);transform-origin:50% 0;opacity:0.9;"><span id="f97">#66</span></div><div class="r" style="left:158px;top:587.80px;width:152px;height:46px;overflow:hidden"><div class="t" style="left:1px;top:10.70px;font-size:13px;font-weight:400;color:#2a2a36;-webkit-text-stroke:0.42px #2a2a36;transform:scaleX(1.175);transform-origin:0 0">Resource Managemer</div><div class="t" style="left:1px;top:28.00px;font-size:13px;font-weight:400;color:#50505a;transform:scaleX(1.2);transform-origin:0 0">requirement analysis</div></div><div class="t" style="top:604.30px;font-size:13px;font-weight:400;color:#3a3a44;left:318.00px;width:60px;text-align:center;transform:scaleX(1.1611);transform-origin:50% 0;"><span id="f98">2h</span></div><div class="r" style="left:467.10px;top:591.50px;width:79.90px;height:40px;background:#eaf3fd;border-left:3px solid #3f88f2;border-radius:2px 0 0 2px"></div><div class="r" style="left:544.00px;top:591.50px;width:3px;height:40px;background:#3f88f2;border-radius:0 2px 2px 0"></div><svg style="left:540.50px;top:605.80px" width="2" height="12"><circle cx="1" cy="1.5" r="0.8" fill="#aaa"/><circle cx="1" cy="6" r="0.8" fill="#aaa"/><circle cx="1" cy="10.5" r="0.8" fill="#aaa"/></svg><div class="t" style="top:604.05px;font-size:14px;font-weight:400;color:#868ed4;-webkit-text-stroke:0.5px #868ed4;left:470.85px;width:80px;text-align:center;transform:scaleX(1.0200);transform-origin:50% 0;"><span id="f99">2</span></div><svg style="left:75.5px;top:658.20px" width="11" height="7"><path d="M0 0 H10.5 L5.25 6Z" fill="#9a9aa2"/></svg><div class="r" style="left:95px;top:646.20px;width:29.6px;height:29.6px;border-radius:50%;background:#4f86d0"></div><div class="t" style="top:655.81px;font-size:10.5px;font-weight:400;color:#333;left:95.00px;width:30px;text-align:center;opacity:0.85;"><span id="f100">SJ</span></div><div class="t" style="top:654.10px;font-size:13px;font-weight:400;color:#50505a;left:133.60px;transform:scaleX(1.1643);transform-origin:0 0;"><span id="f101">Smith Jones</span></div><div class="t" style="top:654.20px;font-size:13px;font-weight:400;color:#3a3a44;left:318.00px;width:60px;text-align:center;transform:scaleX(1.1611);transform-origin:50% 0;"><span id="f102">3h</span></div><div class="t" style="top:654.20px;font-size:13px;font-weight:400;color:#3a3a44;left:387.40px;width:80px;text-align:center;transform:scaleX(1.0426);transform-origin:50% 0;"><span id="f103">182.24h</span></div><div class="t" style="top:652.95px;font-size:14px;font-weight:400;color:#868ed4;-webkit-text-stroke:0.5px #868ed4;left:707.05px;width:80px;text-align:center;transform:scaleX(1.0200);transform-origin:50% 0;"><span id="f104">0</span></div><div class="t" style="top:652.95px;font-size:14px;font-weight:400;color:#868ed4;-webkit-text-stroke:0.5px #868ed4;left:786.95px;width:80px;text-align:center;transform:scaleX(1.0200);transform-origin:50% 0;"><span id="f105">0</span></div><div class="t" style="top:652.95px;font-size:14px;font-weight:400;color:#868ed4;-webkit-text-stroke:0.5px #868ed4;left:866.85px;width:80px;text-align:center;transform:scaleX(1.0200);transform-origin:50% 0;"><span id="f106">0</span></div><div class="t" style="top:652.95px;font-size:14px;font-weight:400;color:#868ed4;-webkit-text-stroke:0.5px #868ed4;left:946.75px;width:80px;text-align:center;transform:scaleX(1.0200);transform-origin:50% 0;"><span id="f107">0</span></div><div class="t" style="top:652.95px;font-size:14px;font-weight:400;color:#868ed4;-webkit-text-stroke:0.5px #868ed4;left:1026.65px;width:80px;text-align:center;transform:scaleX(1.0200);transform-origin:50% 0;"><span id="f108">0</span></div><div class="t" style="top:652.95px;font-size:14px;font-weight:400;color:#868ed4;-webkit-text-stroke:0.5px #868ed4;left:1106.55px;width:80px;text-align:center;transform:scaleX(1.0200);transform-origin:50% 0;"><span id="f109">0</span></div><div class="t" style="top:652.95px;font-size:14px;font-weight:400;color:#868ed4;-webkit-text-stroke:0.5px #868ed4;left:1186.45px;width:80px;text-align:center;transform:scaleX(1.0200);transform-origin:50% 0;"><span id="f110">0</span></div><div class="t" style="top:652.95px;font-size:14px;font-weight:400;color:#868ed4;-webkit-text-stroke:0.5px #868ed4;left:1266.35px;width:80px;text-align:center;transform:scaleX(1.0200);transform-origin:50% 0;"><span id="f111">0</span></div><div class="t" style="top:652.95px;font-size:14px;font-weight:400;color:#868ed4;-webkit-text-stroke:0.5px #868ed4;left:1346.25px;width:80px;text-align:center;transform:scaleX(1.0200);transform-origin:50% 0;"><span id="f112">0</span></div><div class="t" style="top:652.95px;font-size:14px;font-weight:400;color:#868ed4;-webkit-text-stroke:0.5px #868ed4;left:1426.15px;width:80px;text-align:center;transform:scaleX(1.0200);transform-origin:50% 0;"><span id="f113">0</span></div><div class="t" style="top:652.95px;font-size:14px;font-weight:400;color:#868ed4;-webkit-text-stroke:0.5px #868ed4;left:1506.05px;width:80px;text-align:center;transform:scaleX(1.0200);transform-origin:50% 0;"><span id="f114">0</span></div><div class="t" style="top:652.95px;font-size:14px;font-weight:400;color:#868ed4;-webkit-text-stroke:0.5px #868ed4;left:1585.95px;width:80px;text-align:center;transform:scaleX(1.0200);transform-origin:50% 0;"><span id="f115">0</span></div><div class="t" style="top:652.95px;font-size:14px;font-weight:400;color:#868ed4;-webkit-text-stroke:0.5px #868ed4;left:1665.85px;width:80px;text-align:center;transform:scaleX(1.0200);transform-origin:50% 0;"><span id="f116">1</span></div><div class="t" style="top:652.95px;font-size:14px;font-weight:400;color:#868ed4;-webkit-text-stroke:0.5px #868ed4;left:1745.75px;width:80px;text-align:center;transform:scaleX(1.0200);transform-origin:50% 0;"><span id="f117">0</span></div><div class="r" style="left:110px;top:701.60px;width:42px;height:22px;border:1.3px solid #8c90e0;border-radius:3px;background:#fff"></div><div class="t" style="top:705.40px;font-size:13px;font-weight:400;color:#8c90e0;left:110.00px;width:42px;text-align:center;transform:scaleX(1.1197);transform-origin:50% 0;opacity:0.9;"><span id="f118">#32</span></div><div class="r" style="left:158px;top:687.60px;width:152px;height:46px;overflow:hidden"><div class="t" style="left:1px;top:10.70px;font-size:13px;font-weight:400;color:#2a2a36;-webkit-text-stroke:0.42px #2a2a36;transform:scaleX(1.175);transform-origin:0 0">Resource Managemer</div><div class="t" style="left:1px;top:28.00px;font-size:13px;font-weight:400;color:#50505a;transform:scaleX(1.2);transform-origin:0 0">Organize team events</div></div><div class="t" style="top:704.10px;font-size:13px;font-weight:400;color:#3a3a44;left:318.00px;width:60px;text-align:center;transform:scaleX(1.1611);transform-origin:50% 0;"><span id="f119">2h</span></div><div class="r" style="left:706.80px;top:691.30px;width:79.90px;height:40px;background:#eaf3fd;border-left:3px solid #3f88f2;border-radius:2px 0 0 2px"></div><div class="r" style="left:783.70px;top:691.30px;width:3px;height:40px;background:#3f88f2;border-radius:0 2px 2px 0"></div><svg style="left:780.20px;top:705.60px" width="2" height="12"><circle cx="1" cy="1.5" r="0.8" fill="#aaa"/><circle cx="1" cy="6" r="0.8" fill="#aaa"/><circle cx="1" cy="10.5" r="0.8" fill="#aaa"/></svg><div class="t" style="top:703.85px;font-size:14px;font-weight:400;color:#868ed4;-webkit-text-stroke:0.5px #868ed4;left:710.55px;width:80px;text-align:center;transform:scaleX(1.0200);transform-origin:50% 0;"><span id="f120">0</span></div><div class="r" style="left:110px;top:751.50px;width:42px;height:22px;border:1.3px solid #5585d8;border-radius:3px;background:#fff"></div><div class="t" style="top:755.30px;font-size:13px;font-weight:400;color:#5585d8;left:110.00px;width:42px;text-align:center;transform:scaleX(1.1289);transform-origin:50% 0;opacity:0.9;"><span id="f121">#60</span></div><div class="r" style="left:158px;top:737.50px;width:152px;height:46px;overflow:hidden"><div class="t" style="left:1px;top:10.70px;font-size:13px;font-weight:400;color:#2a2a36;-webkit-text-stroke:0.42px #2a2a36;transform:scaleX(1.175);transform-origin:0 0">Software Developmen</div><div class="t" style="left:1px;top:28.00px;font-size:13px;font-weight:400;color:#50505a;transform:scaleX(1.2);transform-origin:0 0">Develop login form for</div></div><div class="t" style="top:754.00px;font-size:13px;font-weight:400;color:#3a3a44;left:318.00px;width:60px;text-align:center;transform:scaleX(0.9676);transform-origin:50% 0;"><span id="f122">1h</span></div><div class="r" style="left:1665.60px;top:741.20px;width:159.80px;height:40px;background:#eaf3fd;border-left:3px solid #3f88f2;border-radius:2px 0 0 2px"></div><div class="r" style="left:1822.40px;top:741.20px;width:3px;height:40px;background:#3f88f2;border-radius:0 2px 2px 0"></div><svg style="left:1818.90px;top:755.50px" width="2" height="12"><circle cx="1" cy="1.5" r="0.8" fill="#aaa"/><circle cx="1" cy="6" r="0.8" fill="#aaa"/><circle cx="1" cy="10.5" r="0.8" fill="#aaa"/></svg><div class="t" style="top:753.75px;font-size:14px;font-weight:400;color:#868ed4;-webkit-text-stroke:0.5px #868ed4;left:1669.35px;width:80px;text-align:center;transform:scaleX(1.0200);transform-origin:50% 0;"><span id="f123">1</span></div><div class="t" style="top:753.75px;font-size:14px;font-weight:400;color:#868ed4;-webkit-text-stroke:0.5px #868ed4;left:1749.25px;width:80px;text-align:center;transform:scaleX(1.0200);transform-origin:50% 0;"><span id="f124">0</span></div><svg style="left:75.5px;top:807.90px" width="11" height="7"><path d="M0 0 H10.5 L5.25 6Z" fill="#9a9aa2"/></svg><div class="r" style="left:95px;top:795.90px;width:29.6px;height:29.6px;border-radius:50%;background:#a3a866"></div><div class="t" style="top:805.51px;font-size:10.5px;font-weight:400;color:#333;left:95.00px;width:30px;text-align:center;opacity:0.85;"><span id="f125">RM</span></div><div class="t" style="top:803.80px;font-size:13px;font-weight:400;color:#50505a;left:133.60px;transform:scaleX(1.1547);transform-origin:0 0;"><span id="f126">Ray Manta</span></div><div class="t" style="top:803.90px;font-size:13px;font-weight:400;color:#3a3a44;left:318.00px;width:60px;text-align:center;transform:scaleX(1.1611);transform-origin:50% 0;"><span id="f127">2h</span></div><div class="t" style="top:803.90px;font-size:13px;font-weight:400;color:#3a3a44;left:387.40px;width:80px;text-align:center;transform:scaleX(1.0489);transform-origin:50% 0;"><span id="f128">183.24h</span></div><div class="t" style="top:802.65px;font-size:14px;font-weight:400;color:#868ed4;-webkit-text-stroke:0.5px #868ed4;left:866.85px;width:80px;text-align:center;transform:scaleX(1.0200);transform-origin:50% 0;"><span id="f129">0.67</span></div><div class="t" style="top:802.65px;font-size:14px;font-weight:400;color:#868ed4;-webkit-text-stroke:0.5px #868ed4;left:946.75px;width:80px;text-align:center;transform:scaleX(1.0200);transform-origin:50% 0;"><span id="f130">0.67</span></div><div class="t" style="top:802.65px;font-size:14px;font-weight:400;color:#868ed4;-webkit-text-stroke:0.5px #868ed4;left:1026.65px;width:80px;text-align:center;transform:scaleX(1.0200);transform-origin:50% 0;"><span id="f131">0.67</span></div><div class="r" style="left:110px;top:851.30px;width:42px;height:22px;border:1.3px solid #5585d8;border-radius:3px;background:#fff"></div><div class="t" style="top:855.10px;font-size:13px;font-weight:400;color:#5585d8;left:110.00px;width:42px;text-align:center;transform:scaleX(1.1404);transform-origin:50% 0;opacity:0.9;"><span id="f132">#5</span></div><div class="r" style="left:158px;top:837.30px;width:152px;height:46px;overflow:hidden"><div class="t" style="left:1px;top:10.70px;font-size:13px;font-weight:400;color:#2a2a36;-webkit-text-stroke:0.42px #2a2a36;transform:scaleX(1.175);transform-origin:0 0">Resource Managemer</div><div class="t" style="left:1px;top:28.00px;font-size:13px;font-weight:400;color:#50505a;transform:scaleX(1.2);transform-origin:0 0">Creates a spent time entry</div></div><div class="t" style="top:853.80px;font-size:13px;font-weight:400;color:#3a3a44;left:318.00px;width:60px;text-align:center;transform:scaleX(1.1611);transform-origin:50% 0;"><span id="f133">2h</span></div><div class="r" style="left:866.60px;top:841.00px;width:239.70px;height:40px;background:#eaf3fd;border-left:3px solid #3f88f2;border-radius:2px 0 0 2px"></div><div class="r" style="left:1103.30px;top:841.00px;width:3px;height:40px;background:#3f88f2;border-radius:0 2px 2px 0"></div><svg style="left:1099.80px;top:855.30px" width="2" height="12"><circle cx="1" cy="1.5" r="0.8" fill="#aaa"/><circle cx="1" cy="6" r="0.8" fill="#aaa"/><circle cx="1" cy="10.5" r="0.8" fill="#aaa"/></svg><div class="t" style="top:853.55px;font-size:14px;font-weight:400;color:#868ed4;-webkit-text-stroke:0.5px #868ed4;left:870.35px;width:80px;text-align:center;transform:scaleX(1.0200);transform-origin:50% 0;"><span id="f134">0.67</span></div><div class="t" style="top:853.55px;font-size:14px;font-weight:400;color:#868ed4;-webkit-text-stroke:0.5px #868ed4;left:950.25px;width:80px;text-align:center;transform:scaleX(1.0200);transform-origin:50% 0;"><span id="f135">0.67</span></div><div class="t" style="top:853.55px;font-size:14px;font-weight:400;color:#868ed4;-webkit-text-stroke:0.5px #868ed4;left:1030.15px;width:80px;text-align:center;transform:scaleX(1.0200);transform-origin:50% 0;"><span id="f136">0.67</span></div><svg style="left:75.5px;top:907.70px" width="11" height="7"><path d="M0 0 H10.5 L5.25 6Z" fill="#9a9aa2"/></svg><div class="r" style="left:95px;top:895.70px;width:29.6px;height:29.6px;border-radius:50%;background:#b08a80"></div><div class="t" style="top:905.31px;font-size:10.5px;font-weight:400;color:#333;left:95.00px;width:30px;text-align:center;opacity:0.85;"><span id="f137">WH</span></div><div class="t" style="top:903.60px;font-size:13px;font-weight:400;color:#50505a;left:133.60px;transform:scaleX(1.1662);transform-origin:0 0;"><span id="f138">William Harris</span></div><div class="t" style="top:903.70px;font-size:13px;font-weight:400;color:#3a3a44;left:318.00px;width:60px;text-align:center;transform:scaleX(1.1611);transform-origin:50% 0;"><span id="f139">2h</span></div><div class="t" style="top:903.70px;font-size:13px;font-weight:400;color:#3a3a44;left:387.40px;width:80px;text-align:center;transform:scaleX(1.0489);transform-origin:50% 0;"><span id="f140">183.24h</span></div><div class="t" style="top:902.45px;font-size:14px;font-weight:400;color:#868ed4;-webkit-text-stroke:0.5px #868ed4;left:946.75px;width:80px;text-align:center;transform:scaleX(1.0200);transform-origin:50% 0;"><span id="f141">0.67</span></div><div class="t" style="top:902.45px;font-size:14px;font-weight:400;color:#868ed4;-webkit-text-stroke:0.5px #868ed4;left:1026.65px;width:80px;text-align:center;transform:scaleX(1.0200);transform-origin:50% 0;"><span id="f142">0.67</span></div><div class="t" style="top:902.45px;font-size:14px;font-weight:400;color:#868ed4;-webkit-text-stroke:0.5px #868ed4;left:1106.55px;width:80px;text-align:center;transform:scaleX(1.0200);transform-origin:50% 0;"><span id="f143">0.67</span></div><div class="t" style="top:902.45px;font-size:14px;font-weight:400;color:#868ed4;-webkit-text-stroke:0.5px #868ed4;left:1186.45px;width:80px;text-align:center;transform:scaleX(1.0200);transform-origin:50% 0;"><span id="f144">0</span></div><div class="r" style="left:946.50px;top:941px;width:319.60px;height:6px;background:#eaf3fd;border-left:3px solid #3f88f2"></div><div class="r" style="left:1263.10px;top:941px;width:3px;height:6px;background:#3f88f2"></div><div class="r" style="left:1839px;top:386px;width:18px;height:561px;background:#f1f1f1;"></div><div class="r" style="left:1841px;top:403px;width:13px;height:494px;background:#c1c1c1;"></div><svg style="left:1843px;top:392px" width="9" height="6"><path d="M0.5 5.5 L4.5 0.8 L8.5 5.5Z" fill="#a3a3a3"/></svg><svg style="left:1843px;top:935px" width="9" height="6"><path d="M0.5 0.5 L4.5 5.2 L8.5 0.5Z" fill="#505050"/></svg><div class="r" style="left:59px;top:947px;width:1780px;height:18px;background:#f1f1f1;"></div><div class="r" style="left:76px;top:949px;width:1109px;height:13px;background:#c1c1c1;"></div><div class="r" style="left:1839px;top:947px;width:18px;height:18px;background:#ffffff;"></div><svg style="left:64px;top:951px" width="6" height="9"><path d="M5.5 0.5 L0.8 4.5 L5.5 8.5Z" fill="#a3a3a3"/></svg><svg style="left:1829px;top:951px" width="6" height="9"><path d="M0.5 0.5 L5.2 4.5 L0.5 8.5Z" fill="#505050"/></svg><div class="r" style="left:59px;top:964.5px;width:1798px;height:1px;background:#d0d0d4;"></div><div class="r" style="left:0px;top:965.5px;width:1899px;height:3px;background:#eeeeea;"></div><div class="r" style="left:1879.5px;top:327px;width:18.5px;height:641px;background:#ffffff;"></div><div class="r" style="left:1878.5px;top:327px;width:1px;height:641px;background:#ececf2;"></div><div class="r" style="left:1870.3px;top:630.6px;width:27.4px;height:27.4px;border-radius:50%;background:#fff;border:1px solid #dcdfe6"></div><svg style="left:1879px;top:638px" width="9" height="13"><path d="M7 1 L1.8 6.5 L7 12" fill="none" stroke="#333" stroke-width="1.6"/></svg><svg style="left:740px;top:356px" width="14" height="20" viewBox="0 0 14 20"><path d="M1.2 1.6 L1.2 17.4 L5.6 13.6 L7.8 18.6 L9.6 17.8 L7.6 12.9 L12.3 12.7Z" fill="#fff" stroke="#4a4f58" stroke-width="0.9" stroke-linejoin="round"/></svg></body></html>
